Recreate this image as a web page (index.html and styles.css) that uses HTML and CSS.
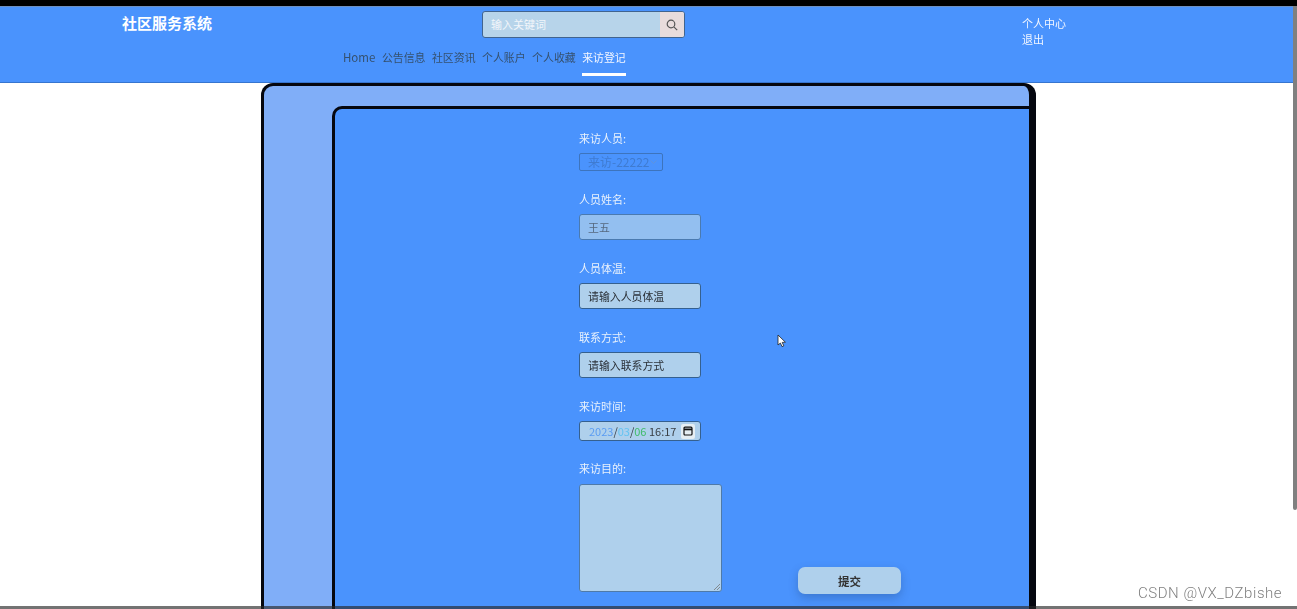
FILE: index.html
```html
<!DOCTYPE html>
<html lang="zh-CN">
<head>
    <meta charset="UTF-8">
    <meta name="viewport" content="width=device-width, initial-scale=1.0">
    <title>社区服务系统</title>
    <link rel="stylesheet" href="styles.css">
</head>

<body>

    <div class="screen">
        <div class="top-strip"></div>

        <!-- Header -->
        <header class="header">
            <div class="header-top">
                <div class="brand">社区服务系统</div>
                <div class="search">
                    <span class="search-text">输入关键词</span>
                    <span class="search-btn">
                        <svg width="12" height="12" viewBox="0 0 12 12" fill="none" stroke="#555" stroke-width="1.2">
                            <circle cx="5" cy="5" r="3.8"></circle>
                            <path d="M7.8 7.8 L11.2 11.2"></path>
                        </svg>
                    </span>
                </div>
                <div class="user-links">
                    <a>个人中心</a>
                    <a>退出</a>
                </div>
            </div>
            <nav class="nav">
                <a class="home">Home</a>
                <a>公告信息</a>
                <a>社区资讯</a>
                <a>个人账户</a>
                <a>个人收藏</a>
                <a class="active">来访登记</a>
            </nav>
        </header>

        <!-- Form -->
        <main class="content">
            <div class="outer-panel">
                <div class="inner-panel">
                    <form class="form">
                        <div class="field">
                            <label>来访人员:</label>
                            <div class="select-box">
                                <span>来访-22222</span>
                                <svg width="7" height="4" viewBox="0 0 7 4" fill="none" stroke="#5f93dc" stroke-width="1">
                                    <path d="M0.5 0.5 L3.5 3.5 L6.5 0.5"></path>
                                </svg>
                            </div>
                        </div>
                        <div class="field">
                            <label>人员姓名:</label>
                            <div class="text-box disabled">王五</div>
                        </div>
                        <div class="field">
                            <label>人员体温:</label>
                            <div class="text-box">请输入人员体温</div>
                        </div>
                        <div class="field">
                            <label>联系方式:</label>
                            <div class="text-box">请输入联系方式</div>
                        </div>
                        <div class="field date-field">
                            <label>来访时间:</label>
                            <div class="date-box">
                                <span class="date-text"><span class="year">2023</span>/<span class="month">03</span>/<span class="day">06</span> 16:17</span>
                                <span class="date-icon">
                                    <svg width="10" height="10" viewBox="0 0 10 10" fill="none" stroke="#111" stroke-width="1.2">
                                        <rect x="1" y="1.2" width="8" height="7.8" rx="1"></rect>
                                        <path d="M1 3.4 H9" stroke-width="1.8"></path>
                                    </svg>
                                </span>
                            </div>
                        </div>
                        <div class="last-row">
                            <div class="field last">
                                <label class="label-wide">来访目的:</label>
                                <div class="area-box">
                                    <svg class="grip" width="7" height="7" viewBox="0 0 7 7" stroke="#777" stroke-width="0.8">
                                        <path d="M1 7 L7 1 M4 7 L7 4"></path>
                                    </svg>
                                </div>
                            </div>
                            <button type="button" class="submit">提交</button>
                        </div>
                    </form>
                </div>
            </div>
        </main>

        <!-- Things from the screen capture that lie over the page -->
        <svg class="cursor" width="10" height="14" viewBox="0 0 10 14">
            <path d="M1 1 L1 11 L3.4 9 L5 12.6 L6.8 11.8 L5.2 8.4 L8.4 8.2 Z" fill="#fff" stroke="#222" stroke-width="0.8"></path>
        </svg>
        <div class="scrollbar"></div>
        <div class="bottom-strip"></div>
        <div class="watermark">CSDN @VX_DZbishe</div>
    </div>

</body>

</html>
```

FILE: styles.css
```css
/* General Styles */
* {
    box-sizing: border-box;
}

body {
    margin: 0;
    font-family: 'Noto Sans CJK SC', 'Noto Sans', sans-serif;
    font-size: 11px;
    background: #fff;
    color: #333;
}

/* the reference is a soft, rescaled capture */
.screen {
    position: relative;
    height: 609px;
    overflow: hidden;
    display: flex;
    flex-direction: column;
    filter: blur(0.35px);
}

.top-strip {
    height: 6px;
    background: #000;
    flex-shrink: 0;
}

/* Header */
.header {
    height: 77px;
    flex-shrink: 0;
    background: #4a93fd;
    border-top: 1px solid #6f90c0;
    border-bottom: 1px solid #3675cf;
    padding-left: 122px;
}

.header-top {
    display: flex;
    align-items: flex-start;
    height: 41px;
}

.brand {
    width: 360px;
    padding-top: 5px;
    font-size: 15px;
    line-height: 22px;
    font-weight: 700;
    color: #fff;
}

.search {
    width: 203px;
    height: 27px;
    margin-top: 4px;
    display: flex;
    border: 1px solid #41648f;
    border-radius: 3px;
    overflow: hidden;
    background: #b7d4ea;
}

.search-text {
    flex: 1;
    padding-left: 8px;
    line-height: 25px;
    color: #f2f6fa;
}

.search-btn {
    width: 24px;
    display: flex;
    align-items: center;
    justify-content: center;
    background: #e8dcdc;
}

.user-links {
    margin-left: 337px;
    padding-top: 8px;
    display: flex;
    flex-direction: column;
    color: #f2f6ff;
    line-height: 16px;
}

.nav {
    display: flex;
    gap: 6.5px;
    margin-left: 221px;
    font-size: 10.9px;
}

.nav a {
    height: 28px;
    line-height: 19px;
    color: #35516f;
}

.nav a.home {
    font-size: 11.5px;
}

.nav a.active {
    color: #f4f7ff;
    border-bottom: 3px solid #fff;
}

/* Panels */
.content {
    flex: 1;
    min-height: 0;
    padding-left: 261px;
}

.outer-panel {
    width: 775px;
    height: 560px;
    padding: 20px 0 0 68px;
    background: #80aef8;
    border: 3px solid #05070f;
    border-right-width: 7px;
    border-bottom: 0;
    border-radius: 12px 12px 0 0;
}

.inner-panel {
    height: 100%;
    padding: 22px 0 0 244px;
    background: #4a93fd;
    border: 3px solid #05070f;
    border-right: 0;
    border-bottom: 0;
    border-radius: 10px 0 0 0;
}

/* Form */
.field {
    margin-bottom: 21px;
}

.field.date-field {
    margin-bottom: 20px;
}

.field label {
    display: block;
    height: 15px;
    line-height: 15px;
    margin-bottom: 7px;
    color: #e8f1fc;
}

.field label.label-wide {
    margin-bottom: 8px;
}

.select-box {
    width: 84px;
    height: 18px;
    padding: 0 5px 0 8px;
    display: flex;
    align-items: center;
    justify-content: space-between;
    border: 1px solid #3d74bd;
    border-radius: 2px;
    color: #3f7bd0;
    font-size: 12px;
    line-height: 16px;
}

.text-box {
    width: 122px;
    height: 26px;
    padding-left: 8px;
    font-size: 10.9px;
    line-height: 24px;
    background: #afd0ec;
    border: 1px solid #35608f;
    border-radius: 3px;
    color: #2b3138;
}

.text-box.disabled {
    background: #93bff0;
    border-color: #4a7ab0;
    color: #56697f;
}

.date-box {
    width: 122px;
    height: 20px;
    padding: 0 5px 0 9px;
    display: flex;
    align-items: center;
    justify-content: space-between;
    background: #afd0ec;
    border: 1px solid #35608f;
    border-radius: 3px;
    color: #3a4046;
}

.date-text .year {
    color: #5a9cf2;
}

.date-text .month {
    color: #62c3f2;
}

.date-text .day {
    color: #3fbb6a;
}

.date-icon {
    width: 14px;
    height: 15px;
    display: flex;
    align-items: center;
    justify-content: center;
    background: #e6eef3;
    border-radius: 2px;
}

.last-row {
    display: flex;
    align-items: flex-end;
    gap: 76px;
}

.field.last {
    margin-bottom: 0;
    padding-bottom: 2px;
}

.area-box {
    position: relative;
    width: 143px;
    height: 108px;
    background: #afd0ec;
    border: 1px solid #4f7aa8;
    border-radius: 3px;
}

.grip {
    position: absolute;
    right: 1px;
    bottom: 1px;
}

.submit {
    width: 103px;
    height: 27px;
    padding: 0;
    border: none;
    border-radius: 7px;
    background: #afd0ec;
    color: #333;
    font-family: inherit;
    font-size: 11.5px;
    font-weight: 700;
    box-shadow: 0 4px 10px rgba(30, 60, 110, 0.3);
}

/* Screen capture overlays */
.cursor {
    position: absolute;
    left: 777px;
    top: 334px;
}

.scrollbar {
    position: absolute;
    right: 0;
    top: 6px;
    width: 4px;
    height: 504px;
    background: #808080;
    border-radius: 0 0 2px 2px;
}

.bottom-strip {
    position: absolute;
    left: 0;
    right: 0;
    bottom: 0;
    height: 3px;
    background: rgba(40, 40, 40, 0.65);
}

.watermark {
    position: absolute;
    left: 1138px;
    top: 584px;
    font-family: 'Roboto', sans-serif;
    font-size: 15px;
    font-weight: 300;
    letter-spacing: 0.55px;
    line-height: 18px;
    color: #808080;
}
```
